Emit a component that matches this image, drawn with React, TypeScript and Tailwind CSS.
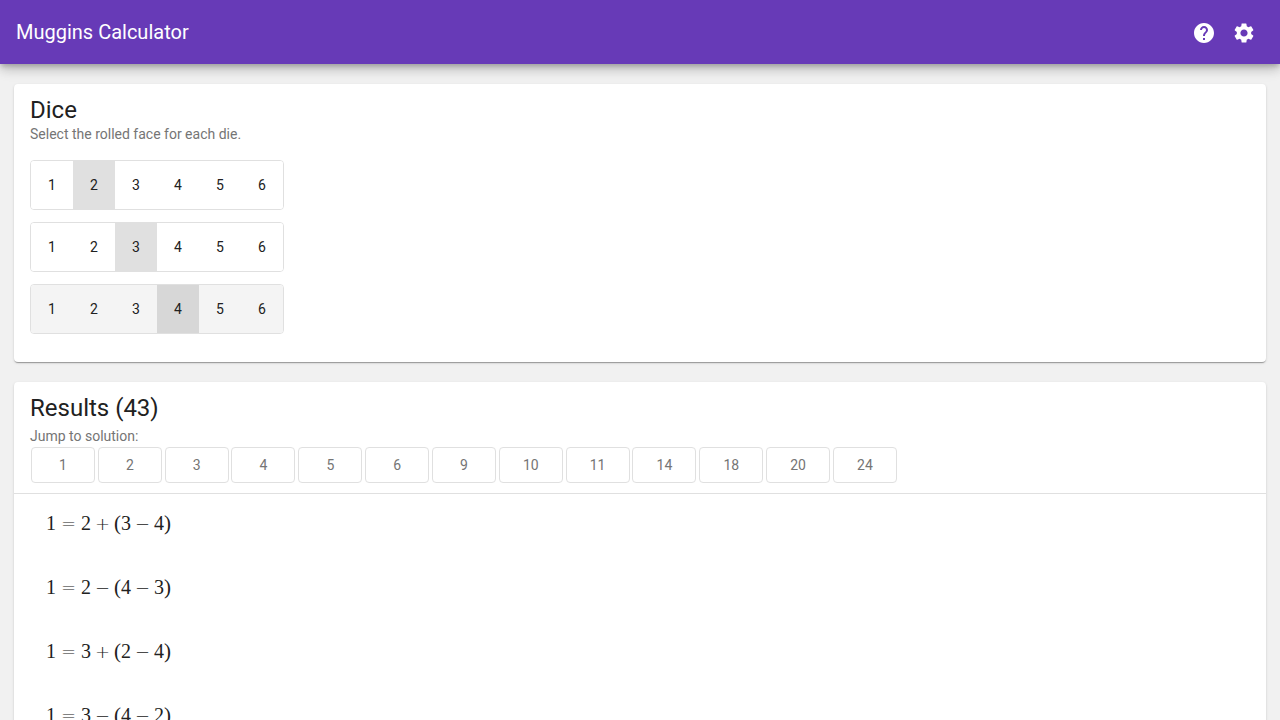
import { useState } from "react";
import { MdHelp, MdSettings } from "react-icons/md";

const FACES = [1, 2, 3, 4, 5, 6];
const TOTALS = [1, 2, 3, 4, 5, 6, 9, 10, 11, 14, 18, 20, 24];
const SOLUTIONS = ["1=2+(3−4)", "1=2−(4−3)", "1=3+(2−4)", "1=3−(4−2)"];

const CARD =
  "rounded-sm bg-white shadow-[0_2px_1px_-1px_rgba(0,0,0,0.2),0_1px_1px_0_rgba(0,0,0,0.14),0_1px_3px_0_rgba(0,0,0,0.12)]";

type DieProps = {
  label: string;
  value: number;
  active: boolean;
  onChange: (face: number) => void;
};

function Die({ label, value, active, onChange }: DieProps) {
  const selected = active ? "bg-[#d7d7d7]" : "bg-[#e0e0e0]";
  const idle = active ? "bg-[#f4f4f4]" : "bg-white";
  return (
    <div
      role="group"
      aria-label={label}
      className="flex w-fit overflow-hidden rounded-sm border border-[#e0e0e0]"
    >
      {FACES.map((face) => (
        <button
          key={face}
          type="button"
          aria-pressed={face === value}
          onClick={() => onChange(face)}
          className={`h-12 w-[42px] text-center text-sm outline-none ${face === value ? selected : idle}`}
        >
          {face}
        </button>
      ))}
    </div>
  );
}

function Equation({ text }: { text: string }) {
  return (
    <li className="flex h-16 items-baseline px-8 pt-[15px] font-['Liberation_Serif',serif] text-[20px] leading-7">
      {text.split("").map((c, i) => {
        if (c === "=") return <Operator key={i} symbol={c} wide />;
        if (c === "+" || c === "−") return <Operator key={i} symbol={c} />;
        if (c === "(" || c === ")")
          return (
            <span key={i} className="w-[7px] text-[21px] leading-7">
              {c}
            </span>
          );
        return (
          <span key={i} className="w-[10px] text-center">
            {c}
          </span>
        );
      })}
    </li>
  );
}

function Operator({ symbol, wide = false }: { symbol: string; wide?: boolean }) {
  return (
    <span
      className={`w-[15px] text-center font-['DejaVu_Sans',sans-serif] text-[18px] leading-7 font-extralight ${wide ? "mx-[5px]" : "mx-1"}`}
    >
      {symbol}
    </span>
  );
}

export default function App() {
  const [dice, setDice] = useState([2, 3, 4]);
  const [active, setActive] = useState(2);

  const roll = (index: number, face: number) => {
    setDice(dice.map((d, i) => (i === index ? face : d)));
    setActive(index);
  };

  return (
    <div className="min-h-screen bg-[#f1f1f1] font-['Roboto',sans-serif] text-[#212121]">
      <header className="relative flex h-16 items-center justify-between bg-[#673ab7] px-4 text-white shadow-[0_3px_5px_-1px_rgba(0,0,0,0.2),0_6px_10px_0_rgba(0,0,0,0.14),0_1px_18px_0_rgba(0,0,0,0.12)]">
        <h1 className="text-xl">Muggins Calculator</h1>
        <div className="flex pt-[2px]">
          <button type="button" aria-label="Help" className="flex size-10 items-center justify-center">
            <MdHelp className="size-6" />
          </button>
          <button type="button" aria-label="Settings" className="flex size-10 items-center justify-center">
            <MdSettings className="size-6" />
          </button>
        </div>
      </header>

      <main className="flex flex-col gap-5 px-[14px] pt-5">
        <section className={`${CARD} px-4 pt-[10px] pb-7`}>
          <h2 className="text-2xl">Dice</h2>
          <p className="text-sm leading-4 text-[#757575]">Select the rolled face for each die.</p>
          <div className="flex flex-col gap-3 pt-[18px]">
            {dice.map((value, i) => (
              <Die
                key={i}
                label={`Die ${i + 1}`}
                value={value}
                active={i === active}
                onChange={(face) => roll(i, face)}
              />
            ))}
          </div>
        </section>

        <section className={CARD}>
          <div className="border-b border-[#e0e0e0] px-4 py-[10px]">
            <h2 className="text-2xl">Results (43)</h2>
            <p className="pt-1 pb-[3px] text-sm leading-4 text-[#757575]">Jump to solution:</p>
            <div className="ml-px flex max-w-[866px] flex-wrap justify-between gap-y-1">
              {TOTALS.map((n) => (
                <button
                  key={n}
                  type="button"
                  className="h-9 w-16 rounded-sm border border-[#e0e0e0] text-center text-sm text-[#757575]"
                >
                  {n}
                </button>
              ))}
            </div>
          </div>
          <ul>
            {SOLUTIONS.map((s) => (
              <Equation key={s} text={s} />
            ))}
          </ul>
        </section>
      </main>
    </div>
  );
}
